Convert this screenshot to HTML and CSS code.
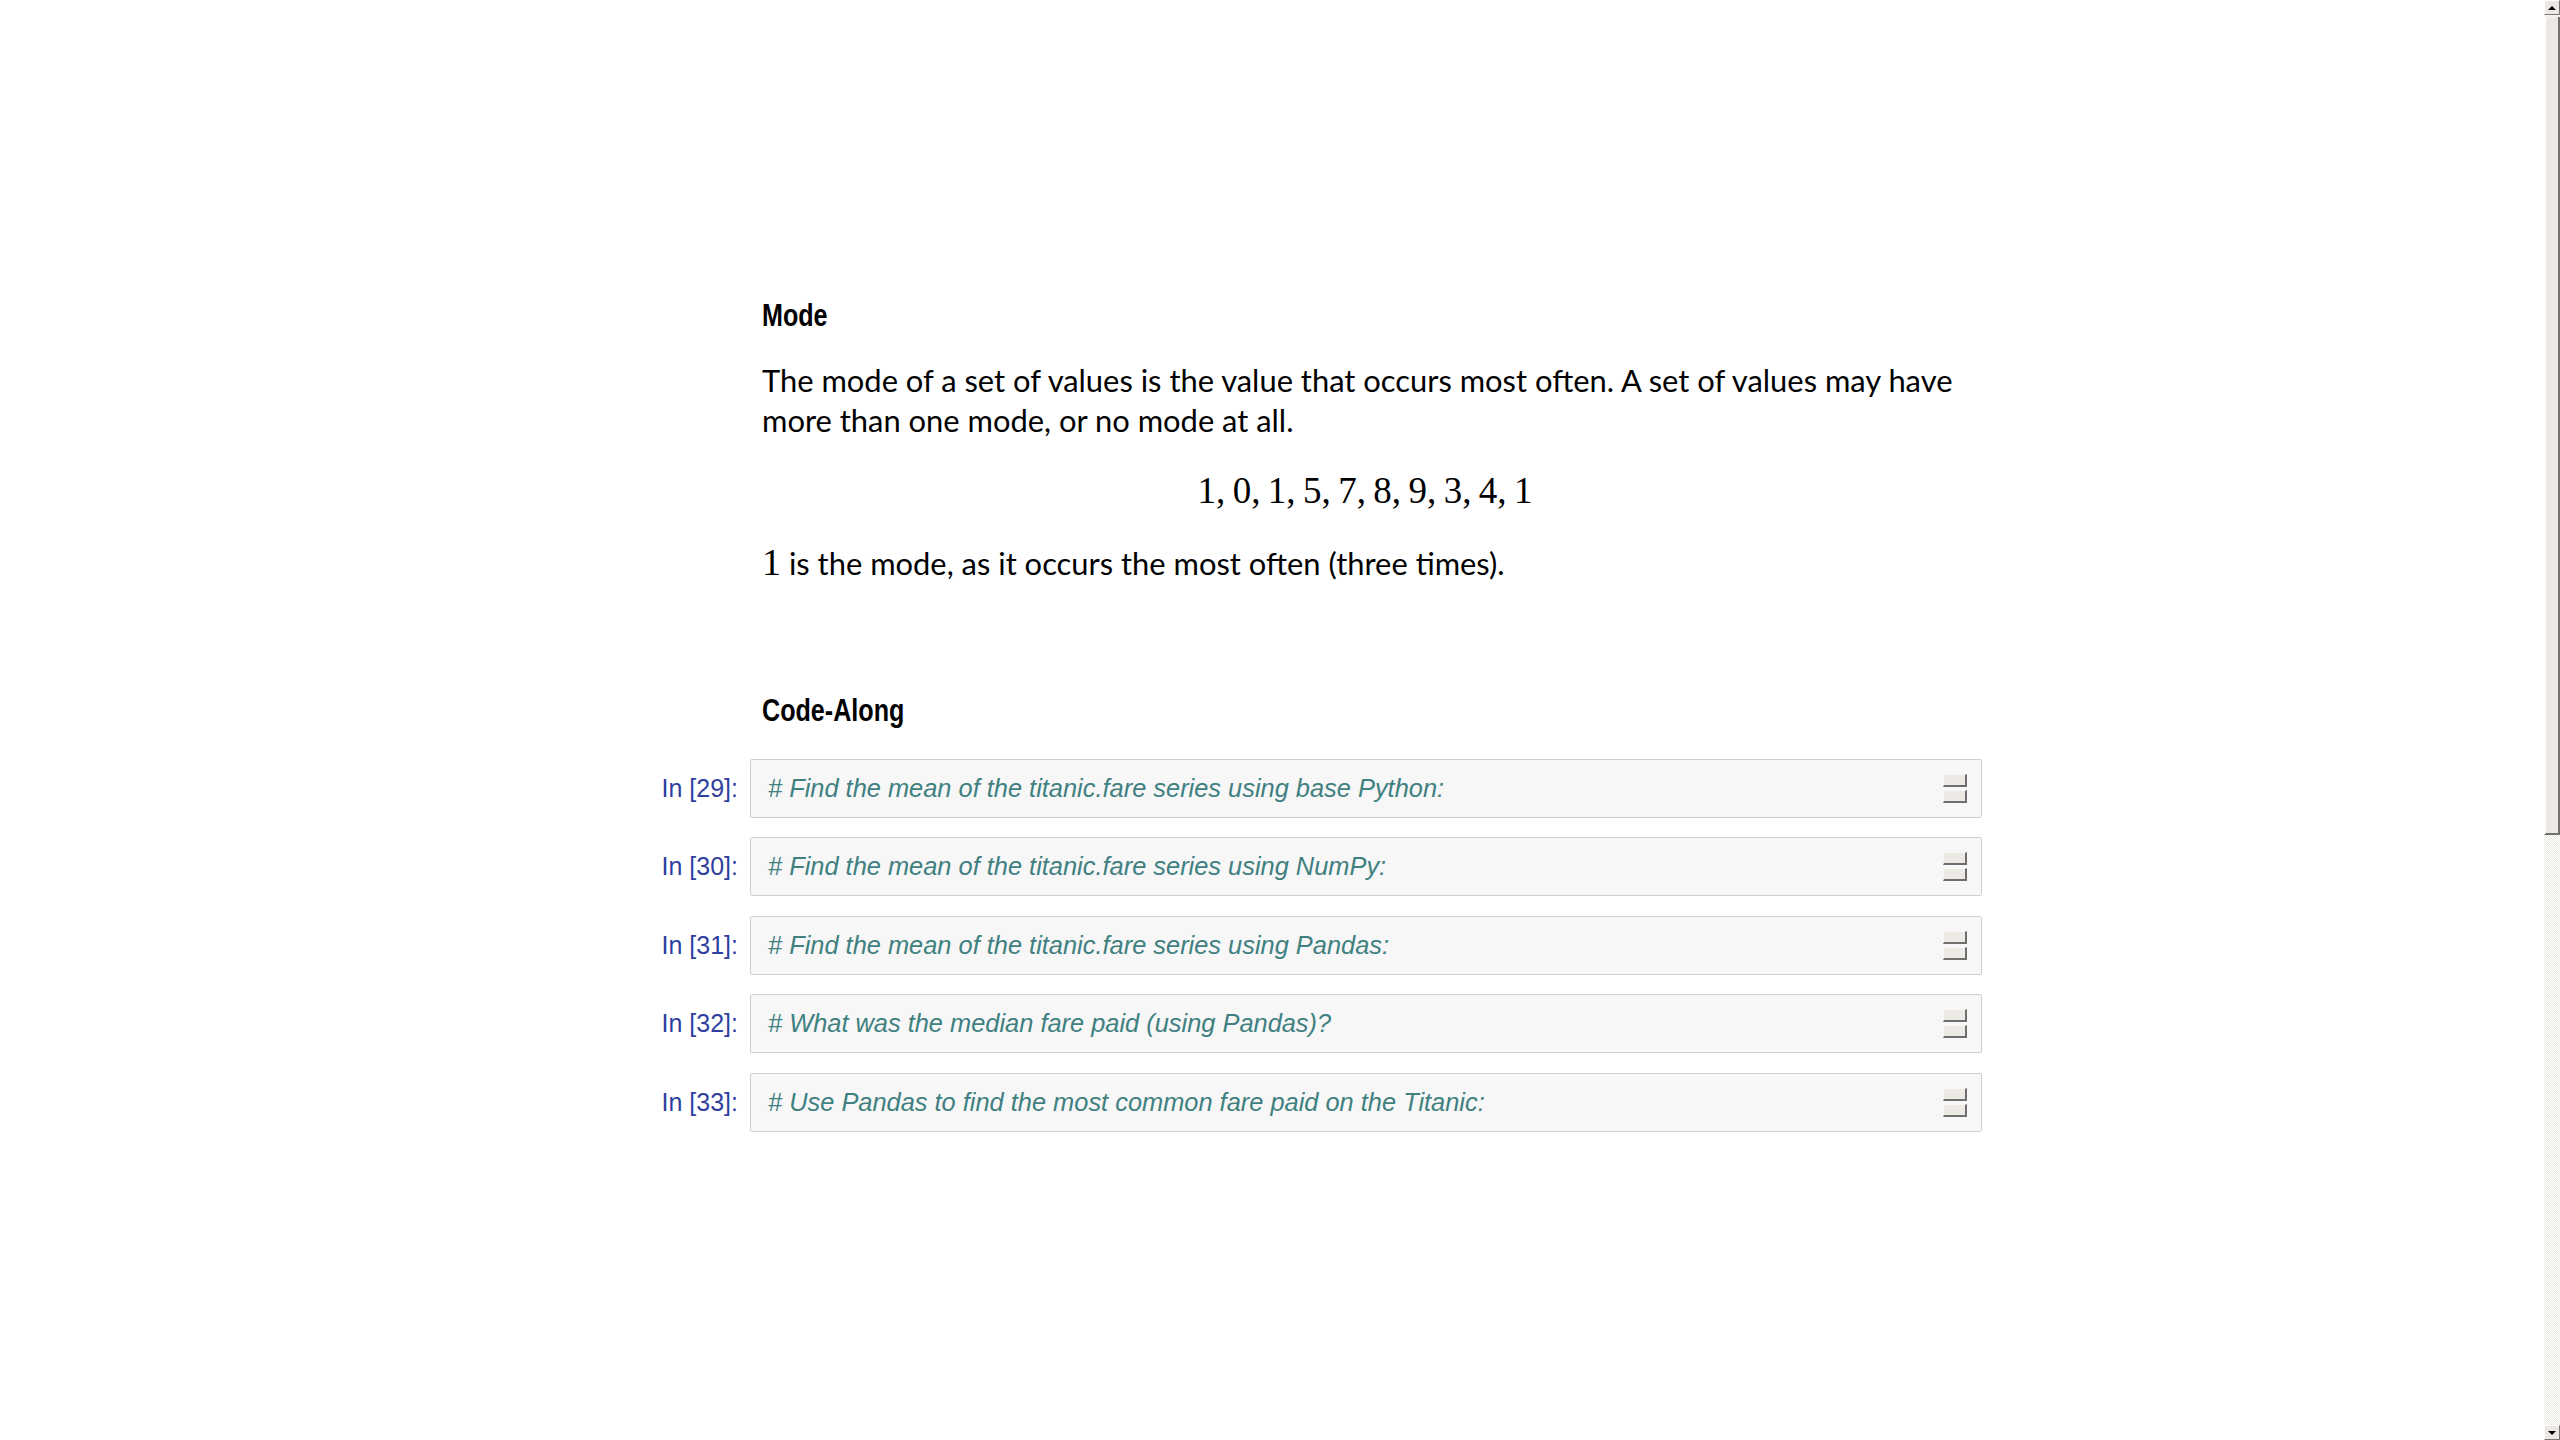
FILE: index.html
```html
<!DOCTYPE html>
<html lang="en">
<head>
<meta charset="utf-8">
<title>Mode — Code-Along</title>
<link rel="stylesheet" href="styles.css">
</head>
<body>
<div class="page">
  <div class="notebook">
    <div class="row md-row">
      <div class="prompt"></div>
      <div class="md">
        <h4 class="hd"><span class="hd-text">Mode</span></h4>
        <p class="txt">The mode of a set of values is the value that occurs most often. A set of values may have more than one mode, or no mode at all.</p>
        <div class="math-display">1,&#8201;0,&#8201;1,&#8201;5,&#8201;7,&#8201;8,&#8201;9,&#8201;3,&#8201;4,&#8201;1</div>
        <p class="txt txt-last"><span class="math-inline">1</span> is the mode, as it occurs the most often (three times).</p>
      </div>
    </div>

    <div class="row md-row md-gap">
      <div class="prompt"></div>
      <div class="md">
        <h4 class="hd"><span class="hd-text">Code-Along</span></h4>
      </div>
    </div>

    <div class="cells">
      <div class="row code-row">
        <div class="prompt in">In&nbsp;[29]:</div>
        <div class="code"><span class="cm"># Find the mean of the titanic.fare series using base Python:</span><div class="ctl"><span></span><span></span></div></div>
      </div>
      <div class="row code-row">
        <div class="prompt in">In&nbsp;[30]:</div>
        <div class="code"><span class="cm"># Find the mean of the titanic.fare series using NumPy:</span><div class="ctl"><span></span><span></span></div></div>
      </div>
      <div class="row code-row">
        <div class="prompt in">In&nbsp;[31]:</div>
        <div class="code"><span class="cm"># Find the mean of the titanic.fare series using Pandas:</span><div class="ctl"><span></span><span></span></div></div>
      </div>
      <div class="row code-row">
        <div class="prompt in">In&nbsp;[32]:</div>
        <div class="code"><span class="cm"># What was the median fare paid (using Pandas)?</span><div class="ctl"><span></span><span></span></div></div>
      </div>
      <div class="row code-row">
        <div class="prompt in">In&nbsp;[33]:</div>
        <div class="code"><span class="cm"># Use Pandas to find the most common fare paid on the Titanic:</span><div class="ctl"><span></span><span></span></div></div>
      </div>
    </div>
  </div>
</div>
<div class="sb">
  <div class="sb-btn"><i class="tri-up"></i></div>
  <div class="sb-thumb"></div>
  <div class="sb-track"></div>
  <div class="sb-btn"><i class="tri-down"></i></div>
</div>
</body>
</html>
```

FILE: styles.css
```css
html, body {
  margin: 0;
  padding: 0;
  height: 100%;
  background: #ffffff;
}

body {
  display: flex;
  overflow: hidden;
  font-family: "Lato", "Liberation Sans", sans-serif;
  color: #000;
}

.page {
  flex: 1;
  min-width: 0;
}

.notebook {
  margin-left: 650px;
  width: 1332px;
  padding-top: 295px;
}

.row {
  display: flex;
}

.prompt {
  width: 100px;
  flex: none;
  box-sizing: border-box;
  padding-right: 12px;
  text-align: right;
}

.md {
  flex: 1;
  padding-left: 12px;
  padding-right: 0;
}

.hd {
  margin: 0;
  height: 40px;
  line-height: 40px;
  font-family: "Liberation Sans", Arial, sans-serif;
  font-weight: 700;
  font-size: 32px;
  white-space: nowrap;
}

.hd-text {
  display: inline-block;
  transform: scaleX(0.785);
  transform-origin: 0 50%;
}

.txt {
  margin: 26px 0 0 0;
  font-family: "Lato", sans-serif;
  font-size: 30.9px;
  line-height: 40px;
}

.math-display {
  margin-top: 26px;
  height: 48px;
  line-height: 48px;
  text-align: center;
  font-family: "Liberation Serif", "DejaVu Serif", serif;
  font-size: 37px;
  padding-right: 14px;
}

.txt-last {
  margin-top: 28px;
  height: 40px;
}

.math-inline {
  font-family: "Liberation Serif", "DejaVu Serif", serif;
  font-size: 38px;
  line-height: 1;
}

.md-gap {
  margin-top: 107px;
}

.cells {
  margin-top: 29px;
  display: flex;
  flex-direction: column;
  gap: 19.4px;
}

.code-row {
  align-items: center;
}

.in {
  font-family: "Liberation Sans", Arial, sans-serif;
  font-size: 25px;
  color: #303f9f;
  white-space: nowrap;
}

.code {
  flex: 1;
  height: 59px;
  box-sizing: border-box;
  border: 1px solid #cfcfcf;
  border-radius: 2px;
  background: #f7f7f7;
  display: flex;
  align-items: center;
  padding-left: 17px;
  padding-right: 14px;
}

.cm {
  flex: 1;
  font-family: "Liberation Sans", Arial, sans-serif;
  font-style: italic;
  font-size: 25.4px;
  color: #408080;
  white-space: nowrap;
}

.ctl {
  display: flex;
  flex-direction: column;
  gap: 3px;
}

.ctl span {
  display: block;
  width: 21px;
  height: 10px;
  background: #edeae5;
  border-top: 1px solid #f8f7f5;
  border-left: 1px solid #f8f7f5;
  border-right: 2px solid #6e6e6e;
  border-bottom: 2px solid #6e6e6e;
}

/* classic scrollbar */
.sb {
  width: 16px;
  flex: none;
  height: 100%;
  display: flex;
  flex-direction: column;
  background-color: #ffffff;
  background-image: repeating-conic-gradient(#ebe8e3 0 25%, #ffffff 0 50%);
  background-size: 2px 2px;
}

.sb-btn {
  height: 15px;
  box-sizing: border-box;
  background: #ece9e4;
  border-top: 1px solid #ffffff;
  border-left: 1px solid #ffffff;
  border-right: 1px solid #777777;
  border-bottom: 1px solid #777777;
  display: flex;
  align-items: center;
  justify-content: center;
  flex: none;
}

.tri-up {
  width: 0;
  height: 0;
  border-left: 4px solid transparent;
  border-right: 4px solid transparent;
  border-bottom: 4px solid #000;
}

.tri-down {
  width: 0;
  height: 0;
  border-left: 4px solid transparent;
  border-right: 4px solid transparent;
  border-top: 4px solid #000;
}

.sb-thumb {
  margin-top: 2px;
  height: 818px;
  box-sizing: border-box;
  background: #ece9e4;
  border-left: 2px solid #ffffff;
  border-right: 2px solid #717171;
  border-bottom: 2px solid #717171;
  flex: none;
}

.sb-track {
  flex: 1;
}
```
